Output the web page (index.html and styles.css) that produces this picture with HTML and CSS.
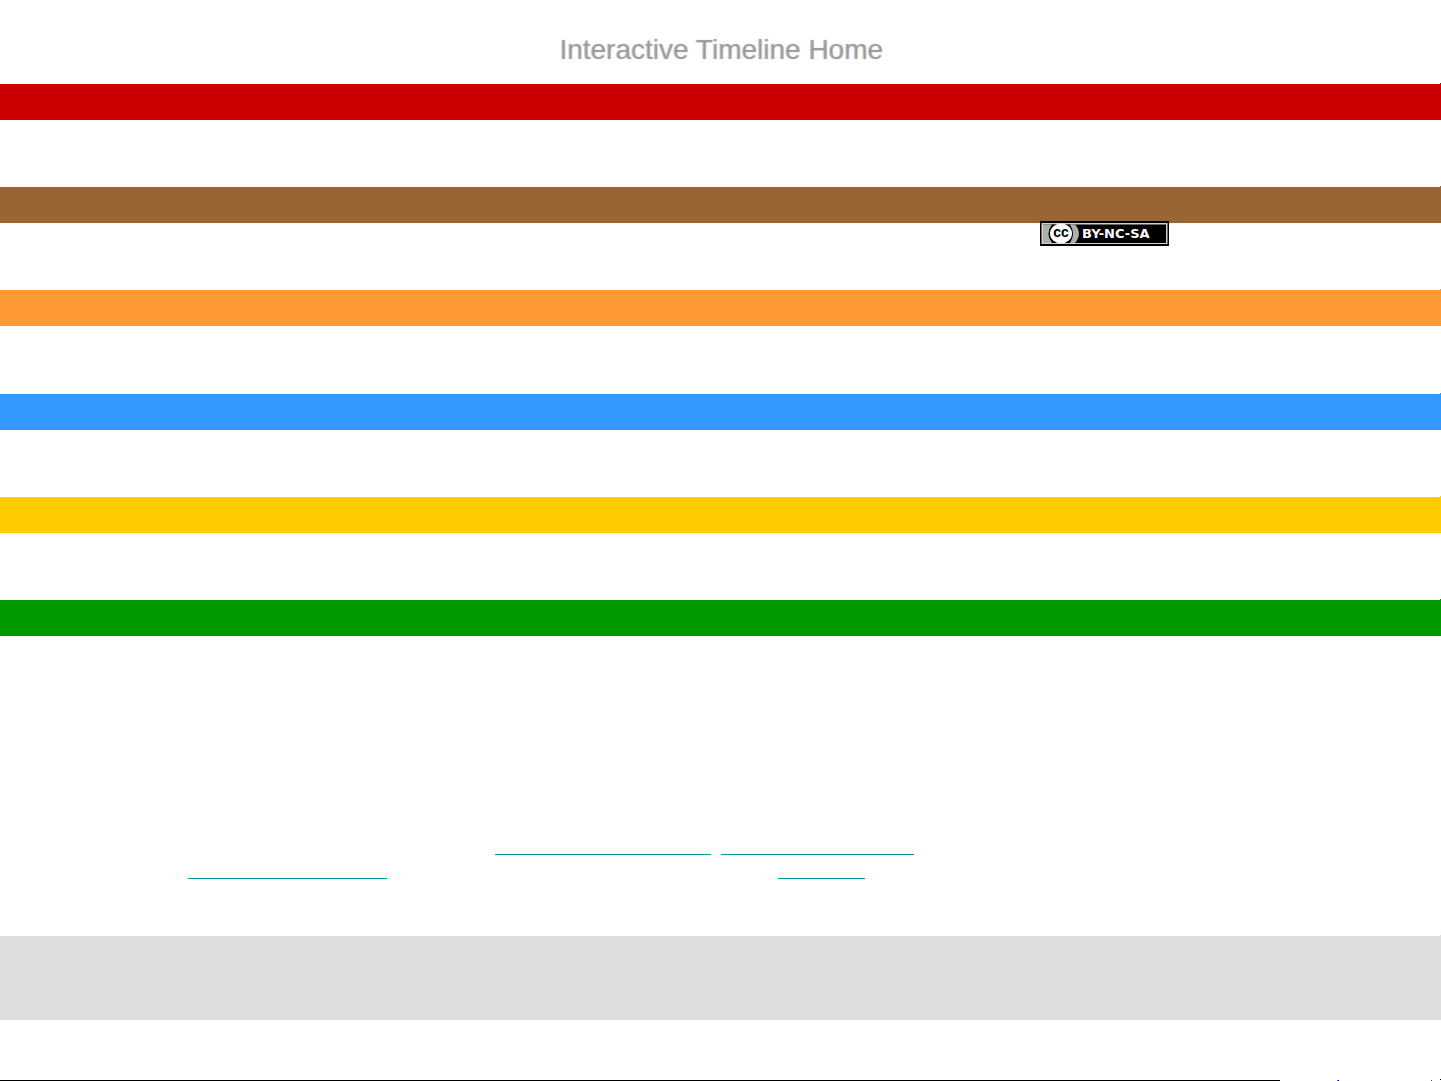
FILE: index.html
```html
<!DOCTYPE html>
<html lang="en">
<head>
  <meta charset="UTF-8">
  <title>Interactive Timeline Home</title>
  <link rel="stylesheet" href="styles.css">
</head>
<body>
  <header class="header">
    <h1>Interactive Timeline Home</h1>
  </header>

  <!-- Timeline bands -->
  <main class="timeline">
    <div class="band red"></div>
    <div class="band brown">
      <a class="license" href="#" aria-label="Creative Commons license">
        <svg width="129" height="25" viewBox="0 0 129 25">
          <rect width="129" height="25" fill="#000"/>
          <rect x="1.5" y="2" width="126" height="21" fill="#d0d2cf"/>
          <rect x="3" y="3.500" width="123" height="18.500" fill="#000"/>
          <path d="M3 3.500H35Q43 12.500 35 22H3Z" fill="#abb1aa"/>
          <path d="M12 3.500H30Q36 12.500 30 22H12Q5 12.500 12 3.500Z" fill="#000"/>
          <ellipse cx="21" cy="12.500" rx="11" ry="10" fill="#fff"/>
          <text class="cc" x="21" y="16" text-anchor="middle">cc</text>
          <text class="terms" x="42" y="17">BY-NC-SA</text>
        </svg>
      </a>
    </div>
    <div class="band orange"></div>
    <div class="band blue"></div>
    <div class="band yellow"></div>
    <div class="band green"></div>
  </main>

  <!-- Credits -->
  <section class="credits">
    <div class="row first">
      <a class="source" href="#"></a>
      <a class="author" href="#"></a>
    </div>
    <div class="row second">
      <a class="project" href="#"></a>
      <a class="contact" href="#"></a>
    </div>
  </section>

  <div class="band panel"></div>

  <footer class="footer">
    <svg class="rule" width="100%" height="2">
      <rect y="1" width="1280" height="1" fill="#000"/>
      <rect x="1337" y="1" width="1" height="1" fill="#f0f"/>
      <rect x="1338" y="1" width="1" height="1" fill="#00c"/>
      <rect x="1431" y="1" width="1" height="1" fill="#f00"/>
      <rect x="1440" width="1" height="1" fill="#000"/>
    </svg>
  </footer>
</body>
</html>
```
FILE: styles.css
```css
* { box-sizing: border-box; }
body { font-family: "Liberation Sans", Arial, sans-serif; background: #fff; margin: 0; min-height: 100vh; display: flex; flex-direction: column; }
.header { padding: 34px 20px 18px; text-align: center; }
h1 { margin: 0; font-size: 28px; line-height: 32px; font-weight: normal; color: rgba(153,153,153,0.4); text-shadow: 1px 0 1px #999; }

.timeline { min-height: 552px; display: flex; flex-direction: column; justify-content: space-between; }
.band { position: relative; height: 36px; }
.band::after { content: ""; position: absolute; top: -1px; right: 0; width: 1px; height: 1px; background: inherit; }
.red { background: #c00; }
.brown { background: #963; }
.orange { background: #f93; }
.blue { background: #39f; }
.yellow { background: #fc0; }
.green { background: #090; }

.license { position: absolute; top: 34px; right: 272px; z-index: 1; }
.license svg { display: block; }
.cc { font: bold 14px "Liberation Sans", Arial, sans-serif; }
.terms { font: bold 13px "DejaVu Sans", Verdana, sans-serif; fill: #fff; }

.credits { width: 100%; max-width: 1065px; margin: 0 auto; padding: 195px 0 57px; }
.row { display: flex; height: 24px; }
.row a { border-bottom: 1px solid #099; }
.first { padding-left: 307px; gap: 10px; }
.second { gap: 391px; }
.source { width: 216px; }
.author { width: 193px; }
.project { width: 199px; }
.contact { width: 87px; }

.panel { height: 84px; background: #ddd; }
.footer { flex: 1; display: flex; align-items: flex-end; }
.rule { display: block; }
```
